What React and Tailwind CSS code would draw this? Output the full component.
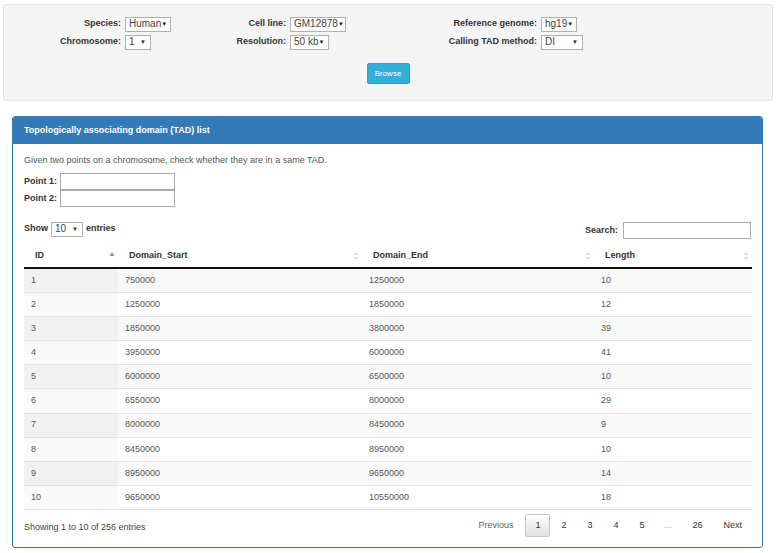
import React from "react";

const rows = [
  [1, 750000, 1250000, 10],
  [2, 1250000, 1850000, 12],
  [3, 1850000, 3800000, 39],
  [4, 3950000, 6000000, 41],
  [5, 6000000, 6500000, 10],
  [6, 6550000, 8000000, 29],
  [7, 8000000, 8450000, 9],
  [8, 8450000, 8950000, 10],
  [9, 8950000, 9650000, 14],
  [10, 9650000, 10550000, 18],
];

function Select({ value, width }) {
  return (
    <div
      className="flex items-center justify-between h-[15px] bg-white border border-[#b0b0b0] pl-[3px] pr-[4px] text-[10px] font-normal text-[#444] whitespace-nowrap"
      style={{ width }}
    >
      <span className="leading-none">{value}</span>
      <span className="text-[6px] leading-none text-[#222]">▼</span>
    </div>
  );
}

function Field({ label, value, width, labelW }) {
  return (
    <div className="flex items-center h-[18px]">
      <div
        className="text-right font-bold text-[9px] text-[#333] pr-[4px] whitespace-nowrap"
        style={{ width: labelW }}
      >
        {label}
      </div>
      <Select value={value} width={width} />
    </div>
  );
}

function SortBoth() {
  return (
    <svg width="6" height="10" viewBox="0 0 6 10" className="shrink-0">
      <path d="M3 0.5 L5.5 4 L0.5 4 Z" fill="#e0e0e0" />
      <path d="M3 9.5 L5.5 6 L0.5 6 Z" fill="#e0e0e0" />
    </svg>
  );
}

function SortUp() {
  return (
    <svg width="6" height="10" viewBox="0 0 6 10" className="shrink-0">
      <path d="M3 1 L5.5 5 L0.5 5 Z" fill="#8b8bd0" />
    </svg>
  );
}

export default function App() {
  return (
    <div
      className="w-[778px] h-[553px] bg-white overflow-hidden pt-[4px]"
      style={{ fontFamily: '"Liberation Sans", Arial, sans-serif' }}
    >
      {/* Controls well */}
      <div className="ml-[3px] w-[770px] h-[97px] bg-[#f5f5f5] border border-[#e3e3e3] rounded-[3px] pt-[10px]">
        <div className="flex pl-[39px]">
          <div className="w-[166px]">
            <Field label="Species:" value="Human" width={46} labelW={82} />
            <Field label="Chromosome:" value="1" width={26} labelW={82} />
          </div>
          <div className="w-[210px]">
            <Field label="Cell line:" value="GM12878" width={56} labelW={81} />
            <Field label="Resolution:" value="50 kb" width={39} labelW={81} />
          </div>
          <div>
            <Field label="Reference genome:" value="hg19" width={36} labelW={122} />
            <Field label="Calling TAD method:" value="DI" width={42} labelW={122} />
          </div>
        </div>
        <div className="flex justify-center mt-[12px]">
          <button className="w-[43px] h-[21px] bg-[#32afdb] border border-[#2aa3cc] rounded-[2px] text-white text-[8px] leading-none">
            Browse
          </button>
        </div>
      </div>

      {/* TAD panel */}
      <div className="ml-[12px] mt-[15px] w-[751px] h-[432px] border border-[#337ab7] rounded-[3px] overflow-hidden">
        <div className="h-[27px] bg-[#337ab7] flex items-center px-[11px] text-white font-bold text-[9px]">
          Topologically associating domain (TAD) list
        </div>
        <div className="px-[11px] pt-[10px] text-[9px] text-[#333]">
          <div className="text-[#555] leading-[12px]">
            Given two points on a chromosome, check whether they are in a same TAD.
          </div>
          <div className="mt-[7px] flex items-center whitespace-nowrap">
            <span className="font-bold w-[36px]">Point 1:</span>
            <div className="w-[115px] h-[17px] bg-white border border-[#aaa]" />
          </div>
          <div className="flex items-center whitespace-nowrap">
            <span className="font-bold w-[36px]">Point 2:</span>
            <div className="w-[115px] h-[17px] bg-white border border-[#aaa]" />
          </div>

          <div className="mt-[12px] flex items-center justify-between">
            <div className="flex items-center gap-[3px] font-bold">
              <span>Show</span>
              <Select value="10" width={32} />
              <span>entries</span>
            </div>
            <div className="flex items-center gap-[5px] font-bold text-[9px] mt-[3px]">
              <span>Search:</span>
              <div className="w-[128px] h-[17px] bg-white border border-[#aaa]" />
            </div>
          </div>

          <table className="mt-[5px] w-[728px] border-collapse table-fixed text-[9px]">
            <colgroup>
              <col className="w-[94px]" />
              <col className="w-[244px]" />
              <col className="w-[232px]" />
              <col className="w-[158px]" />
            </colgroup>
            <thead>
              <tr className="h-[24px] border-b-2 border-[#111]">
                {["ID", "Domain_Start", "Domain_End", "Length"].map((h, i) => (
                  <th key={h} className="font-bold text-left text-[#333] pl-[11px] pr-[3px]">
                    <div className="flex items-center justify-between">
                      <span>{h}</span>
                      {i === 0 ? <SortUp /> : <SortBoth />}
                    </div>
                  </th>
                ))}
              </tr>
            </thead>
            <tbody>
              {rows.map((r, idx) => {
                const odd = idx % 2 === 0;
                return (
                  <tr
                    key={r[0]}
                    className={`h-[24.2px] text-[#555555] ${idx > 0 ? "border-t border-[#e2e2e2]" : ""} ${
                      odd ? "bg-[#f9f9f9]" : "bg-white"
                    } ${idx === rows.length - 1 ? "border-b border-[#111]" : ""}`}
                  >
                    <td className={`pl-[7px] ${odd ? "bg-[#f1f1f1]" : "bg-[#fafafa]"}`}>{r[0]}</td>
                    <td className="pl-[7px]">{r[1]}</td>
                    <td className="pl-[7px]">{r[2]}</td>
                    <td className="pl-[7px]">{r[3]}</td>
                  </tr>
                );
              })}
            </tbody>
          </table>

          <div className="mt-[4px] flex items-center justify-between">
            <div className="text-[#444] pt-[4px]">Showing 1 to 10 of 256 entries</div>
            <div className="flex items-center text-[#333] pr-[9px]">
              <span className="text-[#666] mr-[12px]">Previous</span>
              <span className="w-[25px] h-[23px] flex items-center justify-center border border-[#c8c8c8] rounded-[2px] bg-gradient-to-b from-white to-[#e0e0e0]">
                1
              </span>
              <span className="w-[27px] text-center">2</span>
              <span className="w-[25px] text-center">3</span>
              <span className="w-[27px] text-center">4</span>
              <span className="w-[25px] text-center">5</span>
              <span className="w-[27px] text-center text-[#999]">…</span>
              <span className="w-[32px] text-center">26</span>
              <span className="ml-[10px]">Next</span>
            </div>
          </div>
        </div>
      </div>
    </div>
  );
}
